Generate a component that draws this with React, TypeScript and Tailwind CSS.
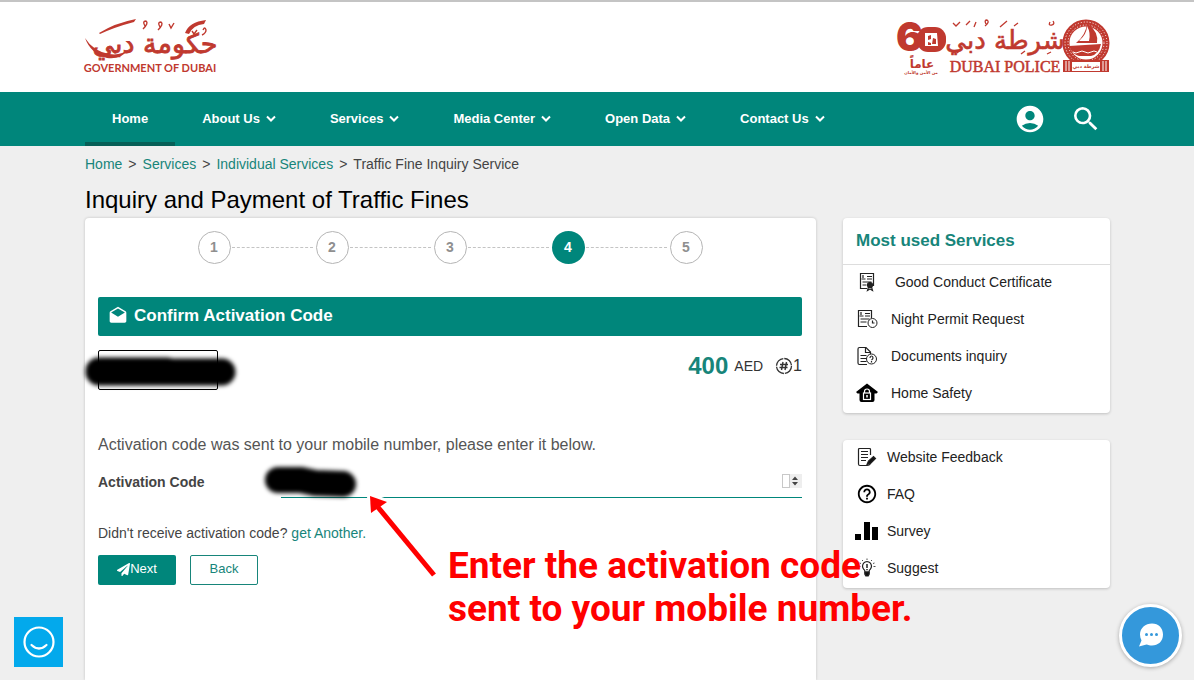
import React from 'react';
import { MdAccountCircle, MdDrafts, MdHelpOutline, MdSearch } from 'react-icons/md';
import { FaPaperPlane } from 'react-icons/fa';

const NAV_ITEMS = [
  { label: 'Home', active: true },
  { label: 'About Us', menu: true },
  { label: 'Services', menu: true },
  { label: 'Media Center', menu: true },
  { label: 'Open Data', menu: true },
  { label: 'Contact Us', menu: true },
];

const STEPS = [1, 2, 3, 4, 5];
const CURRENT_STEP = 4;

const GovernmentLogo: React.FC = () => (
  <svg width="132" height="58" viewBox="0 0 132 58" fill="#c0392f" role="img" aria-label="Government of Dubai" className="overflow-visible">
    <text x="70" y="35" textAnchor="middle" direction="rtl" fontSize="27" stroke="#c0392f" strokeWidth="0.8" className="font-['DejaVu_Sans',sans-serif]">حكومة دبي</text>
    <path d="M14 15 Q30 5 51 1 L49 4 Q30 9 15 16 Z" />
    <path d="M100 15 Q104 4 121 2 L119 6 Q108 7 104 16 Z" />
    <path d="M0 20 Q8 33 24 36 Q36 38 44 31 Q36 42 22 40 Q6 36 0 20 Z" />
    <g fill="none" stroke="#c0392f" strokeWidth="1.4">
      <path d="M60 8 q-3 -5 1 -5 q3 2 -3 8" />
      <path d="M75 9 q-3 -5 1 -5 q3 2 -3 8" />
      <path d="M84 6 l2 4 l3 -5" />
      <path d="M107 13 l2 3 l3 -4" />
      <path d="M118 12 q2 -4 3 0 q0 3 -4 5" />
    </g>
    <text x="65" y="54" textAnchor="middle" fontSize="11" className="font-[Lato,sans-serif] font-bold">GOVERNMENT OF DUBAI</text>
  </svg>
);

const PoliceLogo: React.FC = () => (
  <svg width="214" height="58" viewBox="0 0 214 58" fill="#c0392f" role="img" aria-label="Dubai Police" className="overflow-visible">
    <text x="0" y="33" fontSize="40" className="font-[Inter,sans-serif] font-black">6</text>
    <rect x="21" y="9" width="29" height="25" rx="11" />
    <path d="M29 15 h12 l1 13 h-13 z" fill="#fff" />
    <path d="M32 18 l3 -1 v4 l-3 1 z M37 20 l3 1 v5 l-4 0 z M32 24 l3 1 v2 h-3 z" />
    <text x="26" y="50" textAnchor="middle" direction="rtl" fontSize="12" className="font-['DejaVu_Sans',sans-serif] font-bold">عاماً</text>
    <text x="25" y="56" textAnchor="middle" direction="rtl" fontSize="4" className="font-['DejaVu_Sans',sans-serif] font-bold">من الأمن والأمان</text>

    <text x="109" y="31" textAnchor="middle" direction="rtl" fontSize="26" stroke="#c0392f" strokeWidth="0.6" className="font-['DejaVu_Sans',sans-serif]">شرطة دبي</text>
    <g fill="none" stroke="#c0392f" strokeWidth="1.3">
      <path d="M57 5 l3 3 l4 -4 M70 7 l4 -4 M80 4 l-2 5 M90 6 q-2 -4 1 -4 q3 2 -2 6 M104 9 l7 -6 M118 8 l4 -3 M154 4 q-2 4 2 3 q3 -1 1 -4 M61 35 l3 -3 M125 36 l4 -3 M151 36 l4 -2" />
    </g>
    <text x="109" y="54" textAnchor="middle" fontSize="16" className="font-['Liberation_Serif',serif]" stroke="#c0392f" strokeWidth="0.5">DUBAI POLICE</text>

    <circle cx="190" cy="25" r="20" fill="none" stroke="#c0392f" strokeWidth="7" />
    <circle cx="190" cy="25" r="21" fill="none" stroke="#fff" strokeWidth="1" strokeDasharray="1 2" />
    <circle cx="190" cy="25" r="18" fill="none" stroke="#fff" strokeWidth="1" strokeDasharray="1 2" />
    <path d="M191 5 Q203 14 201 25 H180 Q190 17 191 5 Z" />
    <path d="M191 8 Q195 15 193 23 H183 Q191 16 191 8 Z" fill="#fff" />
    <path d="M173 28 L205 26 Q203 36 195 38 H183 Q176 36 173 28 Z" />
    <path d="M177 34 q3 2 6 0 t6 0 t6 0 t6 0" fill="none" stroke="#fff" strokeWidth="1" />
    <path d="M167 42 H213 V54 H167 Z" />
    <path d="M170 43 v10 M173 43 v10 M207 43 v10 M210 43 v10" stroke="#fff" />
    <rect x="176" y="44" width="28" height="9" fill="#fff" />
    <text x="190" y="50" textAnchor="middle" direction="rtl" fontSize="5" className="font-['DejaVu_Sans',sans-serif] font-bold">شرطة دبي</text>
  </svg>
);

const Chevron: React.FC = () => (
  <svg width="10" height="8" viewBox="0 0 10 8" fill="none" stroke="currentColor" strokeWidth="2" aria-hidden="true">
    <path d="M1 1.5 L5 5.5 L9 1.5" />
  </svg>
);

const line = { fill: 'none', stroke: '#222', strokeWidth: 1.2 };

const CertificateIcon = () => (
  <svg width="22" height="20" viewBox="0 0 22 20" {...line} aria-hidden="true">
    <path d="M11 16.5 H4.5 V1.5 H17.5 V14" />
    <path d="M7 3 v3 M5.5 7 h4 M11 4.5 h5 M11 7 h5 M6.5 10 h9 M6.5 13 h4" />
    <circle cx="14" cy="13" r="2.5" fill="#222" />
    <path d="M12.5 15 L11.5 18.5 L14 17 L16.5 18.5 L15.5 15" />
  </svg>
);

const PermitIcon = () => (
  <svg width="22" height="20" viewBox="0 0 22 20" {...line} aria-hidden="true">
    <path d="M11 17.5 H2.5 V1.5 H15.5 V9" />
    <path d="M5 3 v3 M3.5 7 h4 M9 4.5 h5 M9 7 h5 M4.5 10 h9 M4.5 13 h6" />
    <circle cx="16.5" cy="14" r="4.5" strokeWidth="1" />
    <path d="M16.5 11.5 V14 H18.5" />
  </svg>
);

const DocumentIcon = () => (
  <svg width="22" height="20" viewBox="0 0 22 20" {...line} aria-hidden="true">
    <path d="M11 18.5 H3.5 Q2 18.5 2 17 V3 Q2 1.5 3.5 1.5 H10 L14.5 6 V8" />
    <path d="M9.500 1.5 V6.5 H14.5 M4.5 9.5 h6 M4.5 12.5 h6 M4.5 15.5 h6" />
    <circle cx="15.5" cy="13" r="5" strokeWidth="1" />
    <path d="M14 12 q0 -2 1.5 -2 t1.5 2 q0 1 -1.5 2 M15.5 15 v1.500" strokeWidth="1.200" />
  </svg>
);

const HomeSafetyIcon = () => (
  <svg width="22" height="20" viewBox="0 0 22 20" aria-hidden="true">
    <path d="M11 0.5 L22 9 L20.5 10.5 H18.5 V17 Q18.5 19 16.5 19 H5.5 Q3.5 19 3.5 17 V10.5 H1.5 L0 9 Z" fill="#000" />
    <path d="M8.5 10 V8.5 Q8.5 6 11 6 T13.5 8.5 V10" fill="none" stroke="#fff" strokeWidth="1.2" />
    <rect x="7.5" y="10" width="7" height="6.5" fill="none" stroke="#fff" strokeWidth="1.2" />
    <path d="M11 12 v2.5" stroke="#fff" strokeWidth="1.5" />
  </svg>
);

const FeedbackIcon = () => (
  <svg width="22" height="20" viewBox="0 0 22 20" {...line} aria-hidden="true">
    <path d="M14.500 8 V2.5 Q14.5 1.5 13.5 1.5 H3.5 Q2.5 1.5 2.5 2.5 V17 Q2.5 18.5 4 18.5 H11 Q14 18.5 14.5 16" />
    <path d="M5 4.5 h7 M5 7.5 h7 M5 10.5 h7 M5 13.5 h5" />
    <path d="M11 17.500 L12.500 14 L17.500 9.500 L19.500 11.500 L14.500 16.500 Z" fill="#111" />
  </svg>
);

const SurveyIcon = () => (
  <svg width="24" height="18" viewBox="0 0 24 18" fill="#000" aria-hidden="true" className="shrink-0">
    <path d="M0 12 h6 v6 h-6 z M9 0 h6 v18 h-6 z M17 5 h6 v13 h-6 z" />
  </svg>
);

const SuggestIcon = () => (
  <svg width="22" height="20" viewBox="0 0 22 20" {...line} aria-hidden="true">
    <path d="M9 14 Q9 12 7.5 11 Q6.5 9.5 6.5 8 Q7 4 11 3.5 Q15 4 15.5 8 Q15.5 9.5 14.5 11 Q13 12 13 14 Z" />
    <path d="M8.8 14 h4.4 v2 l-1 2 h-2.4 l-1 -2 z" fill="#111" />
    <path d="M11 6 v4 M11 11 v1.2" strokeWidth="1.5" />
    <path d="M11 0.5 v1.5 M6 2 l1 1 M16 2 l-1 1 M3.5 5 l1.5 0.5 M18.5 5 l-1.5 0.5 M3 8.5 h1.5 M17.5 8.5 h2" strokeWidth="0.8" />
  </svg>
);

const SERVICES = [
  { label: '\u00a0Good Conduct Certificate', icon: <CertificateIcon /> },
  { label: 'Night Permit Request', icon: <PermitIcon /> },
  { label: 'Documents inquiry', icon: <DocumentIcon /> },
  { label: 'Home Safety', icon: <HomeSafetyIcon /> },
];

const LINKS = [
  { label: 'Website Feedback', icon: <FeedbackIcon /> },
  { label: 'FAQ', icon: <MdHelpOutline className="w-[22px] h-[22px] text-black" /> },
  { label: 'Survey', icon: <SurveyIcon /> },
  { label: 'Suggest', icon: <SuggestIcon /> },
];

const Header: React.FC = () => (
  <header>
    <div className="bg-white border-t-2 border-[#c4c4c4]">
      <div className="max-w-[1026px] mx-auto h-[90px] pl-px flex items-center justify-between">
        <a href="#home"><GovernmentLogo /></a>
        <a href="#police"><PoliceLogo /></a>
      </div>
    </div>
    <nav className="bg-[#00867b] text-white">
      <div className="max-w-[1026px] mx-auto h-[54px] pl-px flex items-stretch justify-between">
        <div className="flex text-[13px] font-bold">
          {NAV_ITEMS.map((item) => (
            <a
              key={item.label}
              href="#nav"
              className={
                item.active
                  ? 'flex items-center px-[27px] border-y-4 border-t-transparent border-b-[#075f57]'
                  : 'flex items-center gap-1.5 px-[27px]'
              }
            >
              {item.label}
              {item.menu && <Chevron />}
            </a>
          ))}
        </div>
        <div className="flex items-center gap-6 pr-2">
          <button aria-label="Account"><MdAccountCircle className="w-8 h-8" /></button>
          <button aria-label="Search"><MdSearch className="w-8 h-8" /></button>
        </div>
      </div>
    </nav>
  </header>
);

const Breadcrumb: React.FC = () => (
  <nav className="flex gap-1.5 text-sm leading-5 text-[#444]">
    <a href="#home" className="text-[#17857a]">Home</a>
    <span>&gt;</span>
    <a href="#services" className="text-[#17857a]">Services</a>
    <span>&gt;</span>
    <a href="#individual" className="text-[#17857a]">Individual Services</a>
    <span>&gt;</span>
    <span>Traffic Fine Inquiry Service</span>
  </nav>
);

const Stepper: React.FC = () => (
  <ol className="flex items-center justify-center">
    {STEPS.map((step) => (
      <React.Fragment key={step}>
        {step > 1 && <li aria-hidden="true" className="w-[81px] ml-px mr-[3px] border-t border-dashed border-[#c4c4c4]" />}
        <li
          className={
            step === CURRENT_STEP
              ? 'w-[33px] h-[33px] rounded-full flex items-center justify-center pb-0.5 text-sm font-bold bg-[#00867b] text-white'
              : 'w-[33px] h-[33px] rounded-full flex items-center justify-center pb-0.5 text-sm font-bold border border-[#b5b5b5] text-[#8f8f8f]'
          }
        >
          {step}
        </li>
      </React.Fragment>
    ))}
  </ol>
);

const ConfirmCard: React.FC = () => (
  <section className="flex-1 bg-white rounded-t shadow-[0_0_3px_rgba(0,0,0,0.2)] pl-[13px] pr-[14px] pt-[13px]">
    <Stepper />

    <h2 className="mt-[33px] h-[39px] px-[10px] pb-0.5 flex items-center gap-1.5 rounded-xs bg-[#00867b] text-white text-[17px] font-bold">
      <MdDrafts className="w-5 h-5" />
      Confirm Activation Code
    </h2>

    <div className="mt-[14px] flex items-start justify-between">
      <div className="relative w-[120px] h-10 border border-black rounded-xs">
        <svg className="absolute -left-5 -top-1 max-w-none blur-[2px]" width="170" height="48" viewBox="0 0 170 48" fill="none" stroke="#000" strokeWidth="27" strokeLinecap="round" aria-hidden="true">
          <path d="M20 24 L88 24 M20 25 L143 25" />
        </svg>
      </div>
      <div className="h-8 flex items-center text-[#333]">
        <span className="text-2xl font-bold text-[#17857a]">400</span>
        <span className="ml-1.5 text-sm">AED</span>
        <svg className="ml-3" width="18" height="18" viewBox="0 0 18 18" fill="none" stroke="#333" aria-hidden="true">
          <circle cx="9" cy="9" r="7.5" strokeWidth="1.3" strokeDasharray="10.8 1" />
          <path d="M8 5 L6.5 13 M11.5 5 L10 13 M5 7.5 H13 M4.5 10.5 H12.5" strokeWidth="1.4" />
        </svg>
        <span className="text-base">1</span>
      </div>
    </div>

    <p className="mt-[43px] text-base leading-6 text-[#555]">
      Activation code was sent to your mobile number, please enter it below.
    </p>

    <div className="mt-2 flex items-center">
      <label htmlFor="code" className="w-[183px] text-sm font-bold text-[#444]">Activation Code</label>
      <div className="relative flex-1 flex items-center border-b border-[#00867b]">
        <input id="code" inputMode="numeric" className="flex-1 h-8 outline-none" />
        <svg width="20" height="14" viewBox="0 0 20 14" aria-hidden="true">
          <rect x="8" y="0" width="12" height="14" fill="#eeeeee" />
          <rect x="0.5" y="0.5" width="7" height="13" fill="#fff" stroke="#c8c8c8" />
          <path d="M10 6 L13 2.5 L16 6 Z M10 8 L13 11.5 L16 8 Z" fill="#444" />
        </svg>
        <svg className="absolute -left-5 -top-1 max-w-none blur-[2px]" width="104" height="42" viewBox="0 0 104 42" fill="none" stroke="#000" strokeWidth="26" strokeLinecap="round" aria-hidden="true">
          <path d="M17 19 L40 19 L54 22 L82 23" />
        </svg>
      </div>
    </div>

    <p className="mt-[25px] text-sm leading-5 text-[#444]">
      Didn't receive activation code? <a href="#resend" className="text-[#17857a]">get Another.</a>
    </p>

    <div className="mt-3 flex gap-[14px]">
      <button className="w-[78px] h-[30px] flex items-center justify-center pb-0.5 rounded-xs bg-[#00867b] text-white text-[13px]">
        <FaPaperPlane className="w-[13px] h-[13px]" />
        Next
      </button>
      <button className="w-[68px] h-[30px] pb-0.5 rounded-xs border border-[#17857a] text-[#17857a] text-[13px]">Back</button>
    </div>
  </section>
);

const Sidebar: React.FC = () => (
  <aside className="w-[267px] shrink-0 flex flex-col gap-[27px] text-sm text-[#222]">
    <div className="bg-white rounded shadow-[0_1px_3px_rgba(0,0,0,0.2)]">
      <h2 className="h-[47px] px-[13px] flex items-center border-b border-[#ddd] text-[17px] font-bold text-[#17857a]">
        Most used Services
      </h2>
      <ul>
        {SERVICES.map((item) => (
          <li key={item.label}>
            <a href="#service" className="h-[37px] px-[13px] pb-1 flex items-center gap-[13px]">
              <span className="w-[22px] flex justify-center">{item.icon}</span>
              {item.label}
            </a>
          </li>
        ))}
      </ul>
    </div>
    <ul className="bg-white rounded shadow-[0_1px_3px_rgba(0,0,0,0.2)]">
      {LINKS.map((item) => (
        <li key={item.label}>
          <a href="#link" className="h-[37px] px-[13px] pb-1 flex items-center gap-[9px]">
            <span className="w-[22px] flex justify-center">{item.icon}</span>
            {item.label}
          </a>
        </li>
      ))}
    </ul>
  </aside>
);

const Annotation: React.FC = () => (
  <div className="absolute left-[367px] top-[493px] pointer-events-none">
    <svg width="76" height="88" viewBox="0 0 76 88" aria-hidden="true">
      <path d="M3 3 L20 9 L4 20 Z" fill="#fff" stroke="#fff" strokeWidth="6" />
      <path d="M3 3 L20 9 L4 20 Z" fill="#f00" />
      <path d="M10 13 L67 82" stroke="#f00" strokeWidth="5" />
    </svg>
    <p className="absolute left-[81px] top-[51px] whitespace-nowrap font-[Roboto,sans-serif] font-bold text-[37px] leading-[43px] text-[#f00]">
      Enter the activation code<br />sent to your mobile number.
    </p>
  </div>
);

const App: React.FC = () => (
  <div className="relative min-h-screen flex flex-col bg-[#efefef] font-['Liberation_Sans',Arial,sans-serif]">
    <Header />
    <main className="w-full max-w-[1026px] mx-auto flex-1 flex flex-col pl-px pt-2">
      <Breadcrumb />
      <h1 className="mt-[10px] mb-0.5 text-2xl leading-8 text-black">Inquiry and Payment of Traffic Fines</h1>
      <div className="flex-1 flex items-stretch gap-[27px]">
        <ConfirmCard />
        <Sidebar />
      </div>
    </main>

    <Annotation />

    <button aria-label="Happiness meter" className="fixed left-[14px] bottom-[13px] w-[49px] h-[50px] bg-[#03a9ec] flex items-center justify-center">
      <svg width="34" height="34" viewBox="0 0 34 34" fill="none" stroke="#fff" strokeWidth="2.2" strokeLinecap="round">
        <circle cx="17" cy="17" r="14.5" />
        <path d="M9.5 20 Q17 27 24.5 20" />
      </svg>
    </button>
    <button aria-label="Chat" className="fixed right-3 bottom-[13px] w-[63px] h-[63px] rounded-full border-[3px] border-white bg-[#3498db] shadow-[0_1px_4px_rgba(0,0,0,0.3)] flex items-center justify-center">
      <svg width="26" height="26" viewBox="0 0 26 26" fill="#3498db" aria-hidden="true">
        <path d="M14 0.500 C20.5 0.5 25 5 25 11.5 C25 18.5 20 22.500 14 22.500 C12 22.5 10 22 8.500 21.500 L1 23.500 L3.500 17.500 C2.500 15.5 2 13.5 2 11.500 C2 5 7.500 0.500 14 0.500 Z" fill="#fff" />
        <circle cx="8.500" cy="11.500" r="1.500" />
        <circle cx="13.500" cy="11.500" r="1.500" />
        <circle cx="18.500" cy="11.500" r="1.500" />
      </svg>
    </button>
  </div>
);

export default App;
